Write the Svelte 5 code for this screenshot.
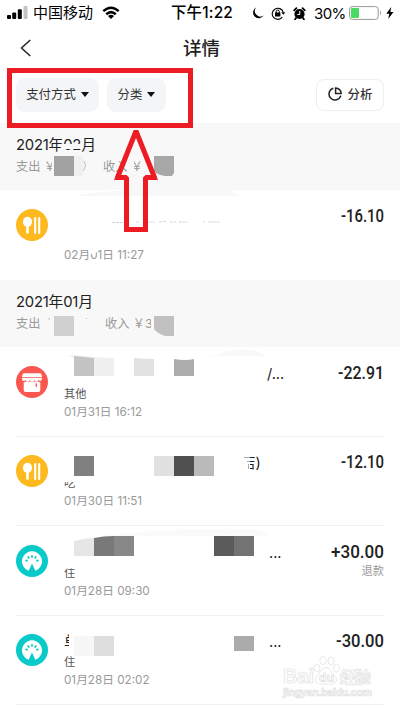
<script>
  const sections = [
    {
      month: '2021年02月', income: '收入 ￥', gap: 16, spent: '支出 ￥   0',
      rows: [{ icon: 'food', title: '', kind: '', date: '02月01日 11:27', amount: '-16.10', w: 43, note: '' }]
    },
    {
      month: '2021年01月', income: '收入 ￥3', gap: 18, spent: '支出 ￥   0',
      rows: [
        { icon: 'shop', title: '/...', at: 203, kind: '其他', date: '01月31日 16:12', amount: '-22.91', w: 46, note: '' },
        { icon: 'food', title: '店)', at: 177, kind: '吃', date: '01月30日 11:51', amount: '-12.10', w: 43, note: '' },
        { icon: 'stay', title: '...', at: 205, kind: '住', date: '01月28日 09:30', amount: '+30.00', w: 53, note: '退款' },
        { icon: 'stay', title: '...', at: 205, lead: '单', kind: '住', date: '01月28日 02:02', amount: '-30.00', w: 48, note: '' }
      ]
    }
  ];
  const mosaic = [
    [54, 156, 20, 20, '#a2a2a2'], [74, 156, 9, 20, '#f0f0f0'],
    [54, 316, 20, 20, '#d0d0d0'],
    [154, 456, 20, 20, '#e1e1e1'], [174, 456, 20, 20, '#505050'], [194, 456, 20, 20, '#bababa'],
    [74, 456, 20, 20, '#808080'],
    [214, 536, 20, 20, '#5b5b5b'], [234, 536, 20, 20, '#737373'],
    [74, 636, 20, 20, '#f7f7f7'], [94, 636, 20, 20, '#dedede'],
    [234, 636, 20, 15, '#ababab']
  ];
</script>

<div class="screen">
  <div class="status">
    <svg class="signal" width="22" height="14" viewBox="0 0 22 14">
      <rect x="0" y="9" width="4" height="4" rx="1"/><rect x="5.2" y="6.5" width="4" height="6.5" rx="1"/><rect x="10.8" y="3.3" width="4" height="9.7" rx="1"/><rect x="16.5" y="0" width="4" height="13" rx="1" fill="#c4c4c4"/>
    </svg>
    <span class="carrier">中国移动</span>
    <svg class="wifi" width="18" height="14" viewBox="0 0 18 14" fill="none" stroke="#000" stroke-width="2.5">
      <path d="M1.3 5.2Q9-1.8 16.7 5.2M4.2 8.3Q9 4 13.8 8.3"/><path d="M6 10Q9 7.7 12 10L9 13Z" fill="#000" stroke="none"/>
    </svg>
    <span class="clock">下午1:22</span>
    <svg class="moon" width="12" height="12" viewBox="0 0 12 12"><path d="M4 .5A5.7 5.7 0 1 0 11.6 8.5 5.6 5.6 0 0 1 4 .5Z"/></svg>
    <svg class="lock" width="15" height="13" viewBox="0 0 15 13">
      <path d="M11.3 10.2A5.6 5.6 0 1 1 12.2 5.2" fill="none" stroke="#000" stroke-width="1.1"/><path d="M10.2 5.2h4.2l-2.1 2.6Z"/><rect x="4" y="5.6" width="5.4" height="4" rx=".5"/><path d="M5.1 6V4.7a1.6 1.6 0 0 1 3.2 0V6" fill="none" stroke="#000"/>
    </svg>
    <svg class="alarm" width="13" height="13" viewBox="0 0 13 13">
      <circle cx="6.5" cy="7" r="5.1"/><path d="M1.2 3.3 3.4 1.2M11.8 3.3 9.6 1.2M3 11l-1 1.4M10 11l1 1.4" stroke="#000" stroke-width="1.8" stroke-linecap="round"/><path d="M6.8 4v3.5H4.3" fill="none" stroke="#fff"/>
    </svg>
    <span class="percent">30%</span>
    <svg class="battery" width="34" height="14" viewBox="0 0 34 14">
      <rect x=".6" y=".6" width="28.6" height="12.8" rx="2.6" fill="#fff" stroke="#999"/><rect x="2" y="2" width="8" height="10" rx="1" fill="#4cd964"/><path d="M31 4.5q2 2.5 0 5Z" fill="#999"/>
    </svg>
    <svg width="8" height="12" viewBox="0 0 8 12"><path d="M5.2 0 .3 6.7h3L2.2 12 7.5 5H4.4Z"/></svg>
  </div>

  <header>
    <svg class="back" width="12" height="18" viewBox="0 0 12 18"><path d="M10.3 1 1.5 9l8.8 8" fill="none" stroke="#222" stroke-width="1.5"/></svg>
    <h1>详情</h1>
  </header>

  <div class="filters">
    <button class="chip pay">支付方式<i></i></button>
    <button class="chip kind">分类<i></i></button>
    <button class="analyse">
      <svg width="14" height="14" viewBox="0 0 14 14" fill="none" stroke="#222" stroke-width="1.5"><path d="M5.3 1.2A6 6 0 1 0 12.8 8.6"/><path d="M7.6.9V6.6h5.6A5.7 5.7 0 0 0 7.6.9Z"/></svg>
      分析
    </button>
  </div>

  {#each sections as s}
    <section>
      <div class="month">
        <h2>{s.month}</h2>
        <p><span class="spent">{s.spent}</span><span style:margin-left="{s.gap}px">{s.income}</span></p>
      </div>
      {#each s.rows as r}
        <article>
          <svg class="icon" width="32" height="32" viewBox="0 0 32 32">
            {#if r.icon === 'food'}
              <circle cx="16" cy="16" r="16" fill="#fdb91e"/><ellipse cx="11.5" cy="12.8" rx="4.6" ry="5.1" fill="#fff"/><path d="M11.5 17v6.4" stroke="#fff" stroke-width="2.6" stroke-linecap="round"/><path d="M19.2 9v15M23.2 9v15" stroke="#fff" stroke-width="2.1" stroke-linecap="round"/>
            {:else if r.icon === 'shop'}
              <circle cx="16" cy="16" r="16" fill="#fa5751"/>
              <path d="M8 7.2h16a1.6 1.6 0 0 1 1.5 1.3l.4 2.4H6.1l.4-2.4A1.6 1.6 0 0 1 8 7.2Z" fill="#fff"/>
              <path d="M6 11.7h20v1.6a1.9 1.9 0 0 1-3.6.5 2 2 0 0 1-4.1 0 2.2 2.2 0 0 1-4.4 0 2 2 0 0 1-4.2 0A1.9 1.9 0 0 1 6 13.3Z" fill="#fff"/>
              <path d="M7.7 16.4q1.6 0 2.5-.8 1.9 1.4 3.8 0 2 1.4 4 0 1.9 1.4 3.9 0 .9.8 2.4.8V24a2 2 0 0 1-2 2H9.7a2 2 0 0 1-2-2Z" fill="#fff"/>
              <path d="M20.3 18v2.2" stroke="#fa5751" stroke-width="1.4" stroke-linecap="round"/>
            {:else}
              <circle cx="16" cy="16" r="16" fill="#08cac8"/><path d="M12.7 25.8A10 10 0 1 1 19.3 25.8L16 18.6Z" fill="#fff"/><g stroke="#08cac8" stroke-width="1.7" stroke-linecap="round"><path d="M16 10.8v1.1M12.2 12l.6 1M19.8 12l-.6 1M10 15.3l1 .5M22 15.3l-1 .5"/></g>
            {/if}
          </svg>
          <div class="info">
            <div class="title"><b>{r.lead ?? ''}</b>{#if r.title}<span style:margin-left="{r.lead ? r.at - 15 : r.at}px">{r.title}</span>{/if}</div>
            <div class="sort">{r.kind}</div>
            <time>{r.date}</time>
          </div>
          <div class="money">
            <svg width={r.w} height="20"><text x="0" y="15.2" textLength={r.w} lengthAdjust="spacingAndGlyphs">{r.amount}</text></svg>
            <small>{r.note}</small>
          </div>
        </article>
      {/each}
    </section>
  {/each}

  <svg class="overlay" width="400" height="710" viewBox="0 0 400 710">
    <path d="M60 149 63 144h18l2 5Z" fill="#f8f8f8"/>
    <path d="M52 156h37v22H52ZM128 156h6v22h-6ZM141 156h15v22h-15Z" fill="#f8f8f8"/>
    <path d="M84 161q3 5-1 10" fill="none" stroke="#bbb"/>
    <path d="M74 196q25-6 90-6h65l10 6Z" fill="#f8f8f8"/>
    <path d="M112 222.5h12M136 222h4M146 222h9M159 222l8-1M170 222h6M179 222h9" stroke="#d5d5d5" stroke-dasharray="3 1"/><path d="M203 222h2M208 222h12" stroke="#ddd"/>
    <path d="M87 244h10v8q-4 4-8 1Z" fill="#fff"/>
    <path d="M46 315h54v22H46Z" fill="#f8f8f8"/><path d="m48 318 2 2M86 318l1 1" stroke="#bbb"/>
    <path d="M151 316h4v20h-4Z" fill="#f8f8f8"/>
    <path d="M207 356q12-1 17-4 20-5 35 0 5 2 7 4Z" fill="#f8f8f8"/>
    <path d="M62 474h14v8H62Z" fill="#fff"/>
    <path d="M240 454h10v18h-10Z" fill="#fff"/>
    <path d="M244 457.5h6M247 461.5h3M248.5 464v5" stroke="#aaa"/>
    <path d="M62 562h14v7q-6-2-14 1Z" fill="#fff"/>
    <path d="M100 536q75-9 155-7 8 1 14 7Z" fill="#fafafa"/>
    <path d="M69 632h12v20H69Z" fill="#fff"/>
    {#each mosaic as [x, y, w, h, fill]}
      <rect {x} {y} width={w} height={h} {fill}/>
    {/each}
    <path d="M154 156h20v17l-2 3h-7q-8-1-11-5Z" fill="#a8a8a8"/>
    <path d="M154 316h20v20h-9q-7-2-11-7Z" fill="#c0c0c0"/>
    <path d="M68 355q11 0 26 2v1H74Z" fill="#f1f1f1"/><path d="M74 356l20 2v18H74Z" fill="#c4c4c4"/><path d="M94 357l20 1v18H94Z" fill="#f0f0f0"/>
    <path d="M134 358q10 1 20 1v17h-20Z" fill="#e2e2e2"/><path d="M174 359q12 2 20 0v17h-20Z" fill="#adadad"/>
    <path d="M74 541q10-3 20-3v18H74Z" fill="#e6e6e6"/><path d="M94 538q9-2 20-2v20H94Z" fill="#797979"/><path d="M114 536h20v20h-20Z" fill="#888"/>
    <path d="M7 68H193V128H7ZM12 73V123H188V73Z" fill="#ed1c24" fill-rule="evenodd"/>
    <path d="M136 131 117.5 177.5H126.5V229.5H145.5V177.5H154.5Z" fill="none" stroke="#ed1c24" stroke-width="5" stroke-linejoin="bevel"/>
    <path d="M124 227h24v5h-24ZM114 180l3-7 4 7ZM158 180l-3-7-4 7Z" fill="#ed1c24"/>
    <g class="mark">
      <text x="283" y="682.5" font-size="20" textLength="31">Bai</text>
      <path d="M316 682q-2-5 3-8 2-6 7-6.500 5 .5 6 6.500 6 3 4 8-2 3-10 2-8 1-10-2Z"/><ellipse cx="317" cy="668" rx="3" ry="4"/><ellipse cx="323" cy="660.5" rx="3.2" ry="4"/><ellipse cx="331" cy="661" rx="3" ry="4"/><ellipse cx="336.5" cy="668" rx="2.8" ry="4"/>
      <text x="319" y="681.5" font-size="12" textLength="15">du</text>
      <text x="340" y="682.500" font-size="16" textLength="31">经验</text>
      <text x="283" y="695.5" font-size="10.5" textLength="89">jingyan.baidu.com</text>
    </g>
  </svg>
</div>

<style>
  :global(body) { margin: 0; background: #fff; }
  .screen { position: relative; width: 400px; height: 710px; overflow: hidden; background: #fff; color: #222; font-family: Inter, "Noto Sans CJK SC", sans-serif; }
  .screen * { box-sizing: border-box; }
  .status { display: flex; align-items: center; height: 26px; padding-left: 7px; color: #000; }
  svg { display: block; flex: none; }
  .signal { margin-top: -1px; }
  .carrier { width: 60px; margin-left: 4px; font-size: 15px; white-space: nowrap; line-height: 24px; }
  .wifi { margin-left: 9px; }
  .clock { width: 63px; margin-left: 51px; font-size: 15.4px; font-weight: 500; letter-spacing: 0.2px; white-space: nowrap; line-height: 24px; }
  .moon { margin-left: 18px; }
  .lock { margin-left: 7px; }
  .alarm { margin-left: 7px; }
  .percent { width: 32px; margin-left: 8px; font-size: 15px; letter-spacing: -0.6px; }
  .battery { margin-left: 3px; margin-right: 3px; }
  header { display: flex; align-items: center; height: 44px; padding-left: 20px; }
  h1 { margin: 0 0 0 151px; font-size: 18.5px; font-weight: 500; line-height: 28px; }
  .filters { display: flex; align-items: center; height: 53px; padding: 0 16px 4px; }
  button { display: flex; align-items: center; justify-content: center; padding: 0 0 2px; border: 0; font: 12.4px/20px "Noto Sans CJK SC", sans-serif; color: #333; white-space: nowrap; }
  .chip { height: 34px; border-radius: 9px; background: #f4f5f7; }
  .pay { width: 83px; }
  .kind { width: 59px; margin-left: 8px; }
  .chip i { margin: 2px 0 0 5px; border: 4px solid transparent; border-top: 5px solid #111; border-bottom: 0; }
  .analyse { width: 68px; height: 32px; margin-left: auto; gap: 6px; border: 1px solid #eee; border-radius: 8px; background: #fff; font-weight: 500; }
  .month { height: 67px; padding: 11px 16px 0; background: #f8f8f8; }
  h2 { margin: 0; font-size: 14.8px; font-weight: 400; line-height: 22px; letter-spacing: -0.2px; }
  p { display: flex; margin: 0; font-size: 12.2px; line-height: 21px; color: #999; white-space: pre; }
  .spent { width: 71px; overflow: hidden; }
  article { display: flex; height: 89.5px; margin: 0 16px; padding-top: 18.5px; border-bottom: 1px solid #f2f2f2; }
  section:nth-of-type(1) article { height: 90px; border-bottom: 0; }
  .info { width: 226px; margin-left: 16px; margin-top: -2px; }
  .title { display: flex; height: 20px; font-size: 14.5px; line-height: 20px; white-space: nowrap; }
  .title b { width: 15px; margin-right: -15px; font-weight: 400; }
  .title b:not(:empty) { margin-right: 0; }
  .sort { height: 20px; font-size: 11.2px; line-height: 20px; color: #555; }
  time { display: block; font-size: 11.7px; line-height: 17px; color: #999; white-space: nowrap; }
  .money { display: flex; flex-direction: column; align-items: flex-end; flex: 1; margin-top: -2px; }
  .money svg { overflow: visible; }
  .money text { font: 500 18.8px Roboto, sans-serif; fill: #222; }
  small { font-size: 11.2px; line-height: 16px; color: #999; }
  .overlay { position: absolute; left: 0; top: 0; }
  .mark { fill: #fff; stroke: #e0e0e0; stroke-width: 0.7; font-family: "Liberation Sans", "Noto Sans CJK SC", sans-serif; font-weight: 700; }
</style>
